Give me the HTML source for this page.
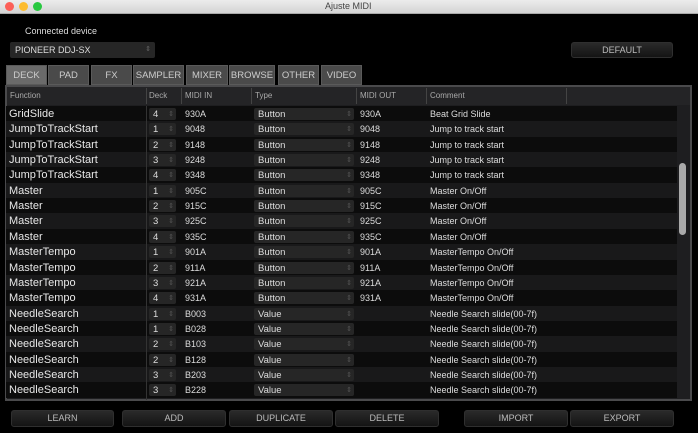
<!DOCTYPE html>
<html><head><meta charset="utf-8"><style>
*{margin:0;padding:0;box-sizing:border-box}
body{width:698px;height:433px;background:#000;font-family:"Liberation Sans",sans-serif;position:relative;overflow:hidden;color:#e8e8e8}
.a{position:absolute}
.title{left:0;top:0;width:698px;height:14px;background:linear-gradient(#ececec,#d4d4d4);border-bottom:1px solid #aaa}
.dot{top:2px;width:9px;height:9px;border-radius:50%}
.btn{height:17px;background:linear-gradient(#2a2a2a,#141414);border:1px solid #2f2f2f;border-radius:3px;font-size:9px;color:#bbb;text-align:center;line-height:15px}
.tab{top:65px;height:20px;background:#4a4a4a;color:#ccc;font-size:9.5px;text-align:center;line-height:20px;border:1px solid #5a5a5a}
.row{left:6px;width:671px;height:15.35px;font-size:11px}
.row span{position:absolute;top:1px;line-height:15px}
.box{position:absolute;top:2px;height:12px;background:#262626;border-radius:2px;font-size:9.5px;line-height:13px;padding-left:4px;color:#ddd}
.box:after{content:"⇕";position:absolute;right:2px;top:0;font-size:7px;color:#555}
.sm{font-size:9px!important;color:#ddd}
.hd{position:absolute;top:91px;font-size:8px;color:#aaa}
.vl{position:absolute;top:88px;width:1px;height:16px;background:#444}
</style></head><body>
<div class="a title"></div>
<div class="a dot" style="left:5px;background:#fc5f57"></div>
<div class="a dot" style="left:19px;background:#fdbc2e"></div>
<div class="a dot" style="left:33px;background:#28c840"></div>
<div class="a" style="left:325px;top:1px;font-size:9px;color:#444">Ajuste MIDI</div>
<div class="a" style="left:25px;top:26px;font-size:9px;color:#ddd">Connected device</div>
<div class="a" style="left:10px;top:42px;width:145px;height:16px;background:#262626;border-radius:2px;font-size:9px;line-height:16px;padding-left:5px;color:#ddd">PIONEER DDJ-SX<span style="position:absolute;right:4px;font-size:7px;color:#666">⇕</span></div>
<div class="a btn" style="left:571px;top:42px;width:102px;height:16px">DEFAULT</div>
<div class="a tab" style="left:6px;width:41px;background:#6a6a6a">DECK</div>
<div class="a tab" style="left:48px;width:41px">PAD</div>
<div class="a tab" style="left:91px;width:41px">FX</div>
<div class="a tab" style="left:133px;width:51px">SAMPLER</div>
<div class="a tab" style="left:186px;width:42px">MIXER</div>
<div class="a tab" style="left:229px;width:46px">BROWSE</div>
<div class="a tab" style="left:278px;width:41px">OTHER</div>
<div class="a tab" style="left:321px;width:41px">VIDEO</div>
<div class="a" style="left:5px;top:85px;width:687px;height:316px;background:#1e1e20;border:2px solid #4a4a4c"></div>
<div class="a" style="left:7px;top:87px;width:683px;height:18px;background:#242426"></div>
<div class="hd" style="left:10px">Function</div>
<div class="hd" style="left:149px">Deck</div>
<div class="hd" style="left:185px">MIDI IN</div>
<div class="hd" style="left:255px">Type</div>
<div class="hd" style="left:360px">MIDI OUT</div>
<div class="hd" style="left:430px">Comment</div>
<div class="vl" style="left:146px"></div><div class="vl" style="left:181px"></div><div class="vl" style="left:251px"></div><div class="vl" style="left:356px"></div><div class="vl" style="left:426px"></div><div class="vl" style="left:566px"></div>
<div class="a" style="left:679px;top:163px;width:7px;height:72px;background:#aaa;border-radius:4px"></div>
<div class="a" style="left:6px;top:106px;width:671px;height:294px" id="t"></div>
<div class="a" style="left:146px;top:106px;width:1px;height:294px;background:#333"></div>
<script>
var d=[["GridSlide","4","930A","Button","930A","Beat Grid Slide"],
["JumpToTrackStart","1","9048","Button","9048","Jump to track start"],
["JumpToTrackStart","2","9148","Button","9148","Jump to track start"],
["JumpToTrackStart","3","9248","Button","9248","Jump to track start"],
["JumpToTrackStart","4","9348","Button","9348","Jump to track start"],
["Master","1","905C","Button","905C","Master On/Off"],
["Master","2","915C","Button","915C","Master On/Off"],
["Master","3","925C","Button","925C","Master On/Off"],
["Master","4","935C","Button","935C","Master On/Off"],
["MasterTempo","1","901A","Button","901A","MasterTempo On/Off"],
["MasterTempo","2","911A","Button","911A","MasterTempo On/Off"],
["MasterTempo","3","921A","Button","921A","MasterTempo On/Off"],
["MasterTempo","4","931A","Button","931A","MasterTempo On/Off"],
["NeedleSearch","1","B003","Value","","Needle Search slide(00-7f)"],
["NeedleSearch","1","B028","Value","","Needle Search slide(00-7f)"],
["NeedleSearch","2","B103","Value","","Needle Search slide(00-7f)"],
["NeedleSearch","2","B128","Value","","Needle Search slide(00-7f)"],
["NeedleSearch","3","B203","Value","","Needle Search slide(00-7f)"],
["NeedleSearch","3","B228","Value","","Needle Search slide(00-7f)"]];
var h="";
d.forEach(function(r,i){
h+='<div class="a row" style="left:0;top:'+Math.round(i*15.35)+'px;height:16px;background:'+(i%2?'#19191a':'#0c0c0c')+'">'+
'<span style="left:3px">'+r[0]+'</span>'+
'<div class="box" style="left:143px;width:27px">'+r[1]+'</div>'+
'<span class="sm" style="left:179px">'+r[2]+'</span>'+
'<div class="box" style="left:248px;width:100px">'+r[3]+'</div>'+
'<span class="sm" style="left:354px">'+r[4]+'</span>'+
'<span class="sm" style="left:424px">'+r[5]+'</span></div>';});
document.getElementById('t').innerHTML=h;
</script>
<div class="a btn" style="left:11px;top:410px;width:103px">LEARN</div>
<div class="a btn" style="left:122px;top:410px;width:104px">ADD</div>
<div class="a btn" style="left:229px;top:410px;width:104px">DUPLICATE</div>
<div class="a btn" style="left:335px;top:410px;width:104px">DELETE</div>
<div class="a btn" style="left:464px;top:410px;width:104px">IMPORT</div>
<div class="a btn" style="left:570px;top:410px;width:104px">EXPORT</div>
</body></html>
